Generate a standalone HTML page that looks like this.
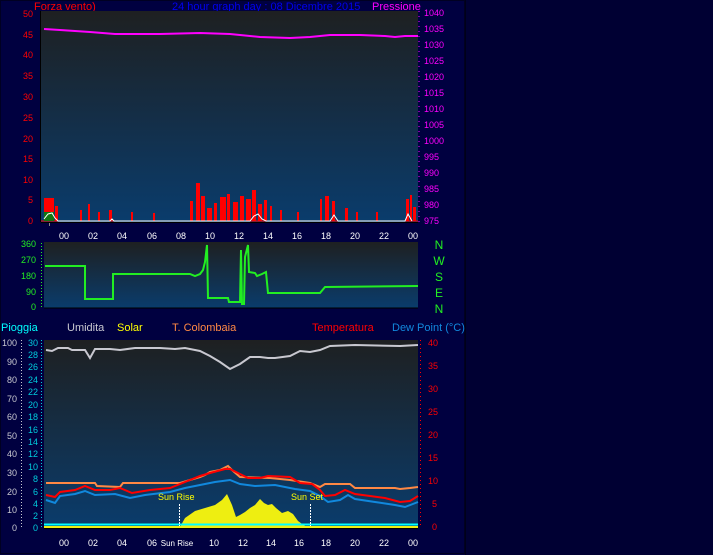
<!DOCTYPE html>
<html><head><meta charset="utf-8"><style>
body{margin:0;background:#000033;width:713px;height:555px;overflow:hidden}
svg{display:block}
text{font-family:"Liberation Sans",sans-serif}
</style></head><body>
<svg width="713" height="555" viewBox="0 0 713 555" xmlns="http://www.w3.org/2000/svg">
<defs>
<linearGradient id="g" x1="0" y1="0" x2="0" y2="1"><stop offset="0" stop-color="#1e2021"/><stop offset="1" stop-color="#0a3c6c"/></linearGradient>
<pattern id="dots" width="29" height="15" patternUnits="userSpaceOnUse"><rect x="0" y="0" width="1" height="1" fill="#000"/><rect x="7" y="0" width="1" height="1" fill="#000"/><rect x="14" y="0" width="1" height="1" fill="#000"/><rect x="21" y="0" width="1" height="1" fill="#000"/></pattern>
</defs>
<rect x="0" y="0" width="465" height="555" fill="#000040"/>
<rect x="0.5" y="0.5" width="464" height="553" fill="none" stroke="#000022"/>
<line x1="465.5" y1="0" x2="465.5" y2="555" stroke="#000018"/>
<!-- Panel 1 -->
<text x="34" y="10" font-size="11" fill="#ff0000">Forza vento)</text>
<text x="172" y="10" font-size="11" fill="#0000ee">24 hour graph day : 08 Dicembre 2015</text>
<text x="372" y="10" font-size="11" fill="#ff00ff">Pressione</text>
<rect x="41" y="11" width="377" height="211" fill="url(#g)"/>
<g fill="#ff0000" font-size="9" text-anchor="end">
<text x="33" y="17">50</text><text x="33" y="38">45</text><text x="33" y="58">40</text><text x="33" y="79">35</text><text x="33" y="100">30</text><text x="33" y="121">25</text><text x="33" y="142">20</text><text x="33" y="162">15</text><text x="33" y="183">10</text><text x="33" y="203">5</text><text x="33" y="224">0</text></g>
<line x1="40.5" y1="11" x2="40.5" y2="222" stroke="#000"/>
<g fill="#ff00ff" font-size="9"><text x="424" y="16">1040</text><text x="424" y="32">1035</text><text x="424" y="48">1030</text><text x="424" y="64">1025</text><text x="424" y="80">1020</text><text x="424" y="96">1015</text><text x="424" y="112">1010</text><text x="424" y="128">1005</text><text x="424" y="144">1000</text><text x="424" y="160">995</text><text x="424" y="176">990</text><text x="424" y="192">985</text><text x="424" y="208">980</text><text x="424" y="224">975</text></g>
<line x1="419" y1="11" x2="419" y2="222" stroke="#ff00ff" stroke-dasharray="1 4"/>
<polyline fill="none" stroke="#ff00ff" stroke-width="2" points="44,29 60,30 75,31 90,32 115,34 160,34 200,33 230,34 260,37 290,38 310,37 330,35 360,35 385,36 395,37 405,36 418,36"/>
<g fill="#ff0000">
<rect x="44" y="198" width="10" height="23"/><rect x="55" y="206" width="3" height="15"/><rect x="80" y="210" width="2" height="11"/><rect x="88" y="204" width="2" height="17"/><rect x="98" y="212" width="2" height="9"/><rect x="109" y="210" width="3" height="11"/><rect x="131" y="212" width="2" height="9"/><rect x="153" y="213" width="2" height="8"/>
<rect x="190" y="201" width="3" height="20"/><rect x="196" y="183" width="4" height="38"/><rect x="201" y="196" width="4" height="25"/><rect x="207" y="208" width="5" height="13"/><rect x="214" y="203" width="3" height="18"/><rect x="220" y="197" width="6" height="24"/><rect x="227" y="194" width="3" height="27"/><rect x="233" y="202" width="5" height="19"/><rect x="240" y="196" width="4" height="25"/><rect x="246" y="199" width="5" height="22"/><rect x="252" y="190" width="4" height="31"/><rect x="258" y="204" width="4" height="17"/><rect x="264" y="200" width="3" height="21"/><rect x="270" y="206" width="2" height="15"/><rect x="280" y="210" width="2" height="11"/><rect x="297" y="212" width="2" height="9"/>
<rect x="320" y="199" width="2" height="22"/><rect x="325" y="196" width="4" height="25"/><rect x="332" y="201" width="3" height="20"/><rect x="345" y="208" width="3" height="13"/><rect x="356" y="212" width="2" height="9"/><rect x="376" y="212" width="2" height="9"/><rect x="406" y="199" width="3" height="22"/><rect x="410" y="195" width="2" height="26"/><rect x="413" y="207" width="3" height="14"/>
</g>
<line x1="41" y1="221" x2="418" y2="221" stroke="#ff0000"/>
<rect x="44" y="212" width="10" height="9" fill="#117711"/>
<polyline fill="none" stroke="#fff" stroke-width="1" points="44,219 48,214 52,213 55,218 58,221 110,221 112,219 114,221 250,221 254,216 258,214 262,219 266,221 330,221 334,215 338,221 405,221 408,214 412,221"/>
<line x1="41" y1="222.5" x2="418" y2="222.5" stroke="#000"/>
<g fill="#888"><rect x="49" y="223" width="1" height="3"/></g>
<g fill="#fff" font-size="9" text-anchor="middle"><text x="64" y="239">00</text><text x="93" y="239">02</text><text x="122" y="239">04</text><text x="152" y="239">06</text><text x="181" y="239">08</text><text x="210" y="239">10</text><text x="239" y="239">12</text><text x="268" y="239">14</text><text x="297" y="239">16</text><text x="326" y="239">18</text><text x="355" y="239">20</text><text x="384" y="239">22</text><text x="413" y="239">00</text></g>
<!-- Panel 2 -->
<rect x="44" y="242" width="374" height="66" fill="url(#g)"/>
<line x1="44" y1="308" x2="418" y2="308" stroke="#000"/>
<g fill="#22ee22" font-size="9" text-anchor="end"><text x="36" y="247">360</text><text x="36" y="263">270</text><text x="36" y="279">180</text><text x="36" y="295">90</text><text x="36" y="310">0</text></g>
<line x1="41.5" y1="243" x2="41.5" y2="309" stroke="#22ee22" stroke-dasharray="1 2"/>
<g fill="#22ee22" font-size="12" text-anchor="middle"><text x="439" y="249">N</text><text x="439" y="265">W</text><text x="439" y="281">S</text><text x="439" y="297">E</text><text x="439" y="313">N</text></g>
<polyline fill="none" stroke="#22ee22" stroke-width="2" points="45,266 85,266 85,299 113,299 113,274 190,274 195,276 200,274 203,270 205,262 207,245 208,298 228,298 229,302 240,302 241,250 242,304 244,304 245,257 248,245 249,272 255,273 257,276 262,274 266,272 268,293 320,293 325,287 418,286"/>
<!-- Panel 3 -->
<g font-size="11"><text x="1" y="331" fill="#00ffff">Pioggia</text><text x="67" y="331" fill="#c8c8d0">Umidita</text><text x="117" y="331" fill="#ffff00">Solar</text><text x="172" y="331" fill="#ff8844">T. Colombaia</text><text x="312" y="331" fill="#ff0000">Temperatura</text><text x="392" y="331" fill="#1188dd">Dew Point (°C)</text></g>
<rect x="44" y="340" width="374" height="187" fill="url(#g)"/>
<g fill="#c8c8d0" font-size="9" text-anchor="end"><text x="17" y="346">100</text><text x="17" y="365">90</text><text x="17" y="383">80</text><text x="17" y="402">70</text><text x="17" y="420">60</text><text x="17" y="439">50</text><text x="17" y="457">40</text><text x="17" y="476">30</text><text x="17" y="495">20</text><text x="17" y="513">10</text><text x="17" y="531">0</text></g>
<line x1="21.5" y1="340" x2="21.5" y2="528" stroke="#c8c8d0" stroke-dasharray="1 2"/>
<g fill="#00ccdd" font-size="9" text-anchor="end"><text x="38" y="346">30</text><text x="38" y="358">28</text><text x="38" y="370">26</text><text x="38" y="383">24</text><text x="38" y="395">22</text><text x="38" y="408">20</text><text x="38" y="420">18</text><text x="38" y="433">16</text><text x="38" y="445">14</text><text x="38" y="457">12</text><text x="38" y="470">10</text><text x="38" y="482">8</text><text x="38" y="495">6</text><text x="38" y="507">4</text><text x="38" y="519">2</text><text x="38" y="531">0</text></g>
<line x1="41.5" y1="340" x2="41.5" y2="528" stroke="#00ccdd" stroke-dasharray="1 2"/>
<g fill="#ff0000" font-size="9"><text x="428" y="346">40</text><text x="428" y="369">35</text><text x="428" y="392">30</text><text x="428" y="415">25</text><text x="428" y="438">20</text><text x="428" y="461">15</text><text x="428" y="484">10</text><text x="432" y="507">5</text><text x="432" y="530">0</text></g>
<line x1="420.5" y1="340" x2="420.5" y2="528" stroke="#ff0000" stroke-dasharray="1 3"/>
<polyline fill="none" stroke="#c8c8d0" stroke-width="2" points="46,350 52,351 58,348 68,348 72,350 85,350 90,358 95,349 110,349 120,350 135,348 160,348 175,349 185,348 195,350 200,351 210,356 220,362 230,369 240,364 250,357 260,357 268,358 275,358 290,356 300,351 310,352 320,350 330,346 355,345 400,346 418,345"/>
<polyline fill="none" stroke="#ff8844" stroke-width="2" points="46,483 95,483 97,486 120,487 123,483 180,483 190,480 200,477 205,475 210,472 220,470 228,466 232,470 240,477 270,478 290,480 310,483 320,487 325,484 350,484 355,488 395,488 400,489 410,488 418,487"/>
<polyline fill="none" stroke="#ff0000" stroke-width="2" points="46,495 55,497 60,492 75,490 85,486 95,490 110,490 120,488 132,493 150,490 170,488 185,482 200,476 210,473 225,469 230,469 238,473 248,478 260,478 268,476 290,477 300,483 312,484 320,490 325,496 335,495 345,490 355,494 370,496 385,498 400,502 410,501 418,496"/>
<polyline fill="none" stroke="#1188dd" stroke-width="2" points="46,500 55,503 60,496 75,494 85,491 95,495 115,494 130,498 145,495 170,492 185,488 200,485 215,482 230,480 240,484 255,486 275,485 295,489 310,491 320,496 328,502 340,500 348,495 355,499 375,502 395,505 405,507 418,502"/>
<polygon fill="#eeee11" points="180,527 185,518 195,511 205,508 215,505 222,500 227,494 232,505 236,517 240,515 245,512 250,508 255,505 260,499 264,503 268,505 272,504 276,508 282,513 288,511 293,514 298,521 305,526 180,527"/>
<line x1="44" y1="524.5" x2="418" y2="524.5" stroke="#00ffff" stroke-width="2"/>
<line x1="44" y1="527" x2="418" y2="527" stroke="#eeee11" stroke-width="2"/>
<line x1="179.5" y1="504" x2="179.5" y2="526" stroke="#fff" stroke-dasharray="2 1"/>
<line x1="310.5" y1="504" x2="310.5" y2="526" stroke="#fff" stroke-dasharray="2 1"/>
<g fill="#ffff00" font-size="9"><text x="158" y="500">Sun Rise</text><text x="291" y="500">Sun Set</text></g>
<line x1="44" y1="528.5" x2="418" y2="528.5" stroke="#000"/>
<g fill="#fff" font-size="9" text-anchor="middle"><text x="64" y="546">00</text><text x="93" y="546">02</text><text x="122" y="546">04</text><text x="152" y="546">06</text><text x="177" y="546" font-size="8">Sun Rise</text><text x="214" y="546">10</text><text x="243" y="546">12</text><text x="271" y="546">14</text><text x="299" y="546">16</text><text x="326" y="546">18</text><text x="355" y="546">20</text><text x="384" y="546">22</text><text x="413" y="546">00</text></g>
</svg>
</body></html>
